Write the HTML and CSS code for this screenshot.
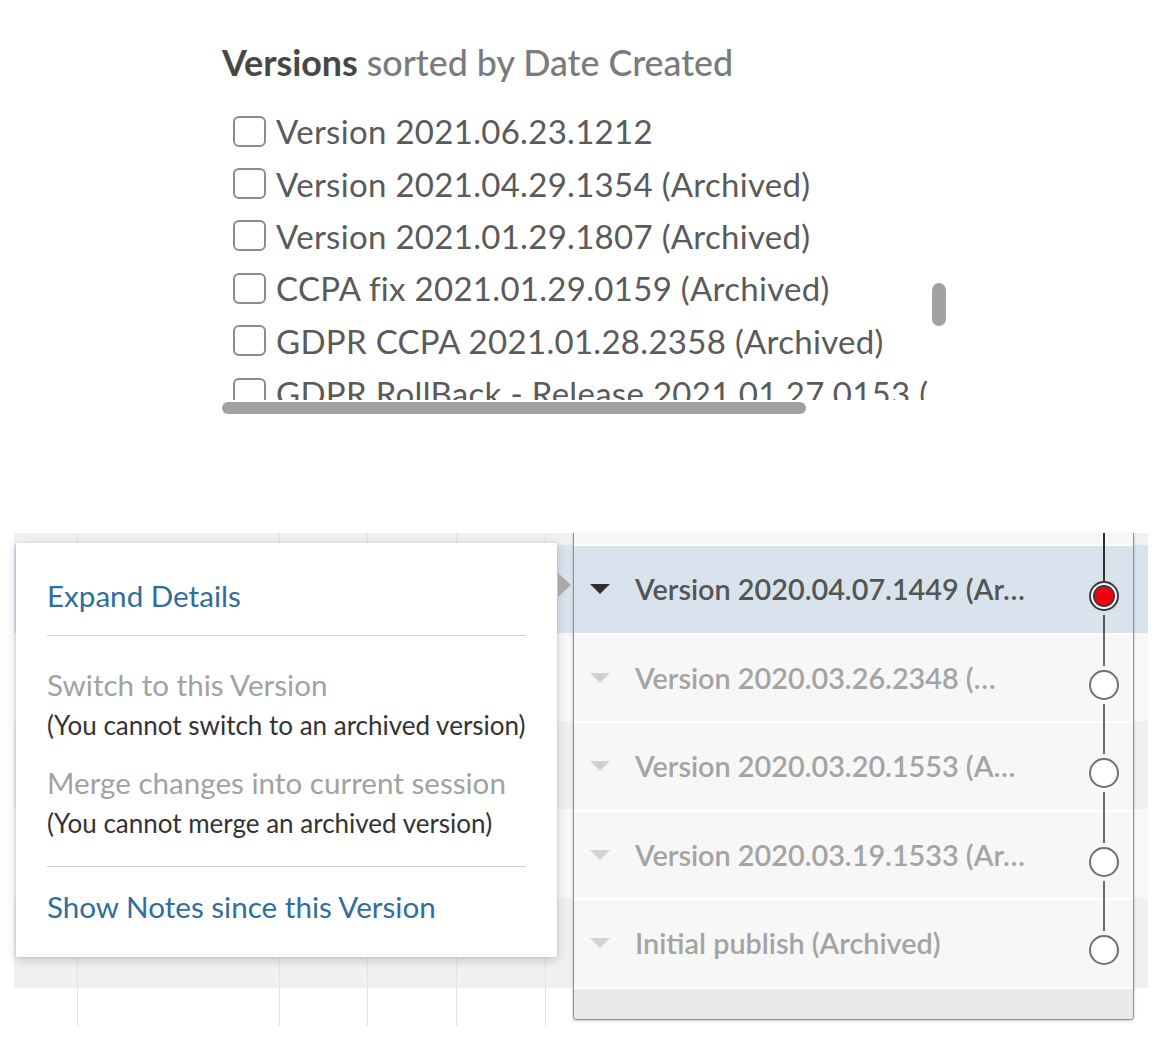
FILE: index.html
```html
<!DOCTYPE html>
<html lang="en">
<head>
<meta charset="utf-8">
<title>Versions</title>
<link rel="stylesheet" href="styles.css">
</head>
<body>
<div class="page">
  <section class="top">
    <h1 class="title"><b>Versions</b> sorted by Date Created</h1>
    <div class="scroller">
      <div class="viewport">
        <ul class="list">
          <li class="item"><span class="cb"></span><span class="label">Version 2021.06.23.1212</span></li>
          <li class="item"><span class="cb"></span><span class="label">Version 2021.04.29.1354 (Archived)</span></li>
          <li class="item"><span class="cb"></span><span class="label">Version 2021.01.29.1807 (Archived)</span></li>
          <li class="item"><span class="cb"></span><span class="label">CCPA fix 2021.01.29.0159 (Archived)</span></li>
          <li class="item"><span class="cb"></span><span class="label">GDPR CCPA 2021.01.28.2358 (Archived)</span></li>
          <li class="item"><span class="cb"></span><span class="label">GDPR RollBack - Release 2021.01.27.0153 (Archived)</span></li>
        </ul>
      </div>
      <div class="vthumb"></div>
      <div class="hthumb"></div>
    </div>
  </section>

  <section class="bottom">
    <div class="grid">
      <div class="grow g0"></div>
      <div class="grow g1"></div>
      <div class="grow g2"></div>
      <div class="grow g3"></div>
      <div class="grow g4"></div>
      <div class="grow g5"></div>
      <div class="grow gw"></div>
    </div>

    <div class="popup">
      <span class="pointer"></span>
      <div class="pi link">Expand Details</div>
      <hr class="divider">
      <div class="pi muted sw">Switch to this Version</div>
      <div class="note">(You cannot switch to an archived version)</div>
      <div class="pi muted mg">Merge changes into current session</div>
      <div class="note">(You cannot merge an archived version)</div>
      <hr class="divider d2">
      <div class="pi link notes">Show Notes since this Version</div>
    </div>

    <div class="panel">
      <div class="ptop"></div>
      <div class="prow sel">
        <span class="caret"></span>
        <span class="ptext">Version 2020.04.07.1449 (Ar…</span>
        <span class="tl tl-first"><span class="dot red"></span></span>
      </div>
      <div class="prow">
        <span class="caret"></span>
        <span class="ptext">Version 2020.03.26.2348 (…</span>
        <span class="tl"><span class="dot"></span></span>
      </div>
      <div class="prow">
        <span class="caret"></span>
        <span class="ptext">Version 2020.03.20.1553 (A…</span>
        <span class="tl"><span class="dot"></span></span>
      </div>
      <div class="prow">
        <span class="caret"></span>
        <span class="ptext">Version 2020.03.19.1533 (Ar…</span>
        <span class="tl"><span class="dot"></span></span>
      </div>
      <div class="prow">
        <span class="caret"></span>
        <span class="ptext">Initial publish (Archived)</span>
        <span class="tl tl-last"><span class="dot"></span></span>
      </div>
      <div class="pfoot"></div>
    </div>
  </section>
</div>
</body>
</html>
```

FILE: styles.css
```css
* { box-sizing: border-box; }
html, body { margin: 0; padding: 0; background: #fff; }
body { font-family: "Lato", "Open Sans", sans-serif; }
.page { width: 1156px; height: 1038px; overflow: hidden; }

/* ---------- top ---------- */
.top { padding: 43px 0 0 222px; }
.title {
  margin: 0;
  font-size: 35.8px;
  line-height: 40px;
  font-weight: 500;
  color: #7b7b7b;
  white-space: nowrap;
}
.title b { font-weight: 700; color: #474747; }

.scroller { position: relative; width: 728px; height: 312px; margin-top: 22px; }
.viewport { width: 708px; height: 295px; overflow: hidden; }
.list { list-style: none; margin: 0; padding: 0 0 0 11px; }
.item {
  height: 52.4px;
  display: flex;
  align-items: center;
  white-space: nowrap;
  font-size: 33px;
  letter-spacing: 0.3px;
  color: #5a5a5a;
}
.cb {
  flex: none;
  width: 33px;
  height: 31px;
  border: 2px solid #8c8c8c;
  border-radius: 6px;
  margin-right: 10px;
  background: #fff;
}
.vthumb {
  position: absolute;
  left: 710px; top: 178px;
  width: 14px; height: 43px;
  border-radius: 7px;
  background: #a2a2a2;
}
.hthumb {
  position: absolute;
  left: 0; top: 297px;
  width: 584px; height: 12px;
  border-radius: 6px;
  background: #a0a0a0;
}

/* ---------- bottom ---------- */
.bottom { position: relative; margin: 116px 0 0 14px; width: 1134px; }
.grid { display: flex; flex-direction: column; }
.grow {
  background-color: #f8f8f8;
  background-image:
    linear-gradient(#e2e2e2, #e2e2e2),
    linear-gradient(#e2e2e2, #e2e2e2),
    linear-gradient(#e2e2e2, #e2e2e2),
    linear-gradient(#e2e2e2, #e2e2e2),
    linear-gradient(#e2e2e2, #e2e2e2);
  background-size: 1px 100%;
  background-repeat: no-repeat;
  background-position: 63px 0, 265px 0, 353px 0, 442px 0, 531px 0;
}
.g0 { height: 12px; background-color: #f1f1f1; }
.g1 { height: 88px; background-color: #d9e3ed; }
.g2 { height: 88px; background-color: #f8f8f8; }
.g3 { height: 88px; background-color: #f0f0f0; }
.g4 { height: 89px; background-color: #f8f8f8; }
.g5 { height: 90px; background-color: #f0f0f0; }
.gw { height: 38px; background-color: #fff; }

/* popup */
.popup {
  position: absolute;
  left: 2px; top: 10px;
  width: 541px;
  background: #fff;
  padding: 35px 31px 32px 31px;
  box-shadow: 0 3px 10px rgba(0,0,0,0.18), 0 0 2px rgba(0,0,0,0.12);
}
.pointer {
  position: absolute;
  left: 542px; top: 30px;
  width: 0; height: 0;
  border-top: 12px solid transparent;
  border-bottom: 12px solid transparent;
  border-left: 13px solid #a9a9a9;
}
.pi { font-size: 29.6px; line-height: 36px; white-space: nowrap; }
.link { color: #2f6e9d; }
.muted { color: #a2a2a2; line-height: 34px; }
.note { font-size: 26px; line-height: 34px; color: #333; margin-top: 6px; white-space: nowrap; }
.divider { border: 0; height: 1px; background: #d0d0d0; margin: 21px 0 0 0; }
.sw { margin-top: 32px; }
.mg { margin-top: 24px; }
.d2 { margin-top: 26px; }
.notes { margin-top: 22px; }

/* panel */
.panel {
  position: absolute;
  left: 559px; top: 0;
  width: 561px;
  background: #f7f7f7;
  border: 1px solid #8e8e8e;
  border-top: 0;
  border-radius: 0 0 4px 4px;
  box-shadow: 0 1px 3px rgba(0,0,0,0.22);
  overflow: hidden;
}
.ptop { height: 11px; background: #f7f7f7; position: relative; }
.prow {
  height: 88.5px;
  border-top: 2px solid #fff;
  display: flex;
  align-items: center;
  background: #f7f7f7;
}
.prow.sel { background: #d9e3ed; }
.caret {
  flex: none;
  width: 0; height: 0;
  margin-left: 16px;
  border-left: 10px solid transparent;
  border-right: 10px solid transparent;
  border-top: 10px solid #d2d2d2;
}
.sel .caret { border-top-color: #2e2e2e; }
.ptext {
  flex: 1;
  margin-left: 25px;
  font-size: 28.8px;
  font-weight: 600;
  color: #a4a4a4;
  white-space: nowrap;
  overflow: hidden;
}
.sel .ptext { color: #555; }
.tl {
  flex: none;
  position: relative;
  width: 30px;
  align-self: stretch;
  margin-right: 14px;
  display: flex;
  align-items: center;
  justify-content: center;
}
.tl::before, .tl::after {
  content: "";
  position: absolute;
  left: 14px;
  width: 2px;
  background: #6a6a6a;
}
.tl::before { top: -2px; height: calc(50% - 10px); }
.tl::after { top: calc(50% + 26px); bottom: 0; }
.tl-first::before { top: -13px; height: calc(50% + 5px); background: #2f2f2f; }
.tl-first::after { background: #555; }
.tl-last::after { display: none; }
.dot {
  width: 30px; height: 30px;
  margin-top: 14px;
  border-radius: 50%;
  border: 2px solid #707070;
  background: #fff;
}
.dot.red {
  border-color: #3a3a3a;
  background: radial-gradient(circle, #f00010 0 9px, #3a3a3a 9.5px 10.5px, #fff 11.5px);
}
.pfoot { height: 32px; border-top: 2px solid #fff; background: #e9e9e9; }
```
